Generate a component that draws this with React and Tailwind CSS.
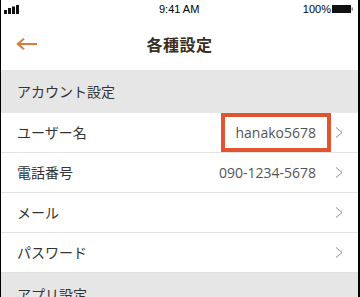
import React from 'react';

const Chevron = () => (
  <svg width="8" height="11" viewBox="0 0 8 11" className="shrink-0">
    <polyline points="1,0.5 7,5.5 1,10.5" fill="none" stroke="#8a8a8a" strokeWidth="1" />
  </svg>
);

const rows = [
  { label: 'ユーザー名', value: 'hanako5678', highlight: true },
  { label: '電話番号', value: '090-1234-5678' },
  { label: 'メール' },
  { label: 'パスワード' },
];

const App = () => {
  return (
    <div
      className="w-[360px] h-[297px] overflow-hidden bg-white border-l border-r-2 border-black flex flex-col"
      style={{ fontFamily: '"Noto Sans CJK JP", "Open Sans", sans-serif' }}
    >
      {/* status bar */}
      <div className="relative h-[18px] shrink-0 flex items-center justify-between pl-[3px] pr-[4px] text-[11px] text-black" style={{ fontFamily: '"Liberation Sans", Arial, sans-serif' }}>
        <svg width="16" height="9" viewBox="0 0 16 9">
          <rect x="0" y="5" width="3" height="4" fill="#111" />
          <rect x="4" y="3" width="3" height="6" fill="#111" />
          <rect x="8" y="1.5" width="3" height="7.5" fill="#111" />
          <rect x="12" y="0" width="3" height="9" fill="#111" />
        </svg>
        <span className="absolute left-[158px] top-[1px]">9:41 AM</span>
        <div className="flex items-center">
          <span>100%</span>
          <svg width="22" height="8" viewBox="0 0 22 8" className="ml-[1px]">
            <rect x="0.5" y="0.5" width="18" height="7" fill="#111" stroke="#111" />
            <rect x="19.5" y="2.5" width="1.5" height="3" fill="#888" />
          </svg>
        </div>
      </div>

      {/* nav bar */}
      <div className="relative h-[52px] shrink-0 flex items-center justify-center">
        <svg width="22" height="12" viewBox="0 0 22 12" className="absolute left-[15px] top-[20px]">
          <path d="M21 6H2M8 0.8L1.8 6L8 11.2" fill="none" stroke="#d97c3f" strokeWidth="2" />
        </svg>
        <h1 className="text-[16px] font-bold text-[#3a2e22] tracking-[0.5px]">各種設定</h1>
      </div>

      {/* section header */}
      <div className="h-[43px] shrink-0 bg-[#e6e6e6] flex items-center pl-4 text-[14px] text-[#333]">
        アカウント設定
      </div>

      {rows.map((row) => (
        <div key={row.label} className="h-10 shrink-0 box-border border-b border-[#e2e2e2] flex items-stretch pl-4 pr-[15px] text-[14px]">
          <span className="text-[#333] flex items-center flex-1">{row.label}</span>
          {row.value && (
            row.highlight ? (
              <span
                className="h-[39px] border-4 border-[#e25430] flex items-center pl-[10px] pr-[11px] mr-[4px] text-[#555]"
                style={{ fontFamily: '"Open Sans", sans-serif' }}
              >
                {row.value}
              </span>
            ) : (
              <span className="flex items-center mr-[19px] text-[#555]" style={{ fontFamily: '"Open Sans", sans-serif' }}>
                {row.value}
              </span>
            )
          )}
          <span className="flex items-center">
            <Chevron />
          </span>
        </div>
      ))}

      <div className="h-[43px] shrink-0 bg-[#e6e6e6] flex items-center pl-4 text-[14px] text-[#333]">
        アプリ設定
      </div>
    </div>
  );
};

export default App;
